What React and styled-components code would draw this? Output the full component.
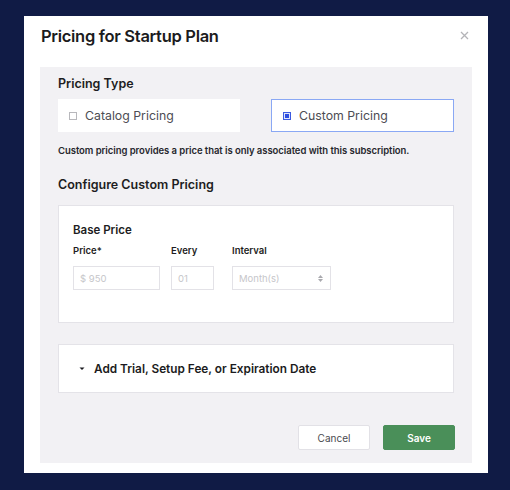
import React from "react";
import styled, { createGlobalStyle } from "styled-components";

const GlobalStyle = createGlobalStyle`
    html, body {
        margin: 0;
        padding: 0;
        background: #101b45;
    }
    body {
        font-family: Inter, "Liberation Sans", sans-serif;
        color: #1d1d22;
    }
`;

const Page = styled.div`
    width: 510px;
    height: 490px;
    box-sizing: border-box;
    padding: 16px 0 0 24px;
`;

const Modal = styled.div`
    width: 464px;
    height: 457px;
    box-sizing: border-box;
    background: #ffffff;
    padding: 0 16px;
    display: flex;
    flex-direction: column;
`;

const Header = styled.div`
    height: 51px;
    display: flex;
    align-items: center;
    justify-content: space-between;
    padding: 0 0 12px 1px;
    box-sizing: border-box;
`;

const Title = styled.h2`
    margin: 0;
    font-size: 16.5px;
    font-weight: 600;
    letter-spacing: -0.3px;
    color: #1b1b20;
`;

const Close = styled.button`
    border: 0;
    background: none;
    padding: 0;
    margin-right: 1px;
    width: 14px;
    height: 14px;
    color: #b4b4b8;
    cursor: pointer;
    display: flex;
    align-items: center;
    justify-content: center;
`;

const Panel = styled.div`
    background: #f2f1f4;
    height: 396px;
    box-sizing: border-box;
    padding: 8px 18px 0;
    display: flex;
    flex-direction: column;
`;

const SectionTitle = styled.div`
    font-size: 12.5px;
    font-weight: 600;
    line-height: 18px;
    color: #1d1d22;
    margin-top: ${(p) => p.$top || 0}px;
`;

const Options = styled.div`
    display: grid;
    grid-template-columns: 182px 183px;
    column-gap: 31px;
    margin-top: 6px;
`;

const Option = styled.div`
    height: 33px;
    box-sizing: border-box;
    background: #ffffff;
    border: 1px solid ${(p) => (p.$active ? "#8aa8f4" : "#ffffff")};
    display: flex;
    align-items: center;
    gap: 8px;
    padding-left: ${(p) => (p.$active ? 11 : 10)}px;
    font-size: 12.3px;
    color: #4d4d53;
`;

const Box = styled.span`
    width: 8px;
    height: 8px;
    box-sizing: border-box;
    border: 1px solid ${(p) => (p.$checked ? "#3c5ae0" : "#b8b8bc")};
    background: ${(p) => (p.$checked ? "#dfe6fb" : "#fff")};
    display: flex;
    align-items: center;
    justify-content: center;

    &::after {
        content: "";
        width: 4px;
        height: 4px;
        background: ${(p) => (p.$checked ? "#2f4ee0" : "transparent")};
    }
`;

const Note = styled.p`
    margin: 13px 0 0;
    font-size: 9.5px;
    font-weight: 600;
    color: #26262c;
    letter-spacing: -0.05px;
`;

const Card = styled.div`
    background: #ffffff;
    border: 1px solid #e4e3e8;
    box-sizing: border-box;
    height: ${(p) => p.$h}px;
    margin-top: ${(p) => p.$top}px;
`;

const BaseCard = styled(Card)`
    padding: 16px 14px 0;
`;

const CardTitle = styled.div`
    font-size: 11.5px;
    font-weight: 600;
    line-height: 16px;
    color: #1d1d22;
`;

const Fields = styled.div`
    display: flex;
    gap: 11px;
    margin-top: 6px;
`;

const Field = styled.div`
    display: flex;
    flex-direction: column;
    width: ${(p) => p.$w}px;
    margin-right: ${(p) => p.$gap || 0}px;
`;

const Label = styled.label`
    font-size: 9.5px;
    font-weight: 600;
    line-height: 14px;
    color: #1d1d22;
`;

const Input = styled.div`
    margin-top: 8px;
    height: 24px;
    box-sizing: border-box;
    border: 1px solid #e3e2e7;
    display: flex;
    align-items: center;
    justify-content: space-between;
    padding: 0 7px 0 6px;
    font-size: 9.5px;
    color: #c6c6ca;
    background: #fff;
`;

const Arrows = styled.span`
    display: flex;
    flex-direction: column;
    align-items: center;
    gap: 1px;
    color: #a9a9ae;
`;

const AccordionCard = styled(Card)`
    display: flex;
    align-items: center;
    padding-left: 20px;
    gap: 9px;
    font-size: 11.8px;
    font-weight: 600;
    color: #1b1b20;
`;

const Footer = styled.div`
    display: flex;
    justify-content: flex-end;
    gap: 13px;
    margin-top: 32px;
    margin-right: -1px;
`;

const Button = styled.button`
    height: 25px;
    width: ${(p) => p.$w}px;
    box-sizing: border-box;
    font-family: inherit;
    font-size: 10px;
    cursor: pointer;
    border-radius: 2px;
    border: 1px solid ${(p) => (p.$primary ? "#4a8f59" : "#e2e1e6")};
    background: ${(p) => (p.$primary ? "#4a8f59" : "#ffffff")};
    color: ${(p) => (p.$primary ? "#ffffff" : "#4a4a50")};
    font-weight: ${(p) => (p.$primary ? 600 : 400)};
`;

export default function App() {
    return (
        <>
            <GlobalStyle />
            <Page>
                <Modal>
                    <Header>
                        <Title>Pricing for Startup Plan</Title>
                        <Close aria-label="Close">
                            <svg width="9" height="9" viewBox="0 0 9 9">
                                <path
                                    d="M1 1L8 8M8 1L1 8"
                                    stroke="currentColor"
                                    strokeWidth="1.3"
                                />
                            </svg>
                        </Close>
                    </Header>
                    <Panel>
                        <SectionTitle>Pricing Type</SectionTitle>
                        <Options>
                            <Option>
                                <Box />
                                Catalog Pricing
                            </Option>
                            <Option $active>
                                <Box $checked />
                                Custom Pricing
                            </Option>
                        </Options>
                        <Note>
                            Custom pricing provides a price that is only
                            associated with this subscription.
                        </Note>
                        <SectionTitle $top={20}>
                            Configure Custom Pricing
                        </SectionTitle>
                        <BaseCard $h={118} $top={11}>
                            <CardTitle>Base Price</CardTitle>
                            <Fields>
                                <Field $w={87}>
                                    <Label>Price*</Label>
                                    <Input>$ 950</Input>
                                </Field>
                                <Field $w={43} $gap={7}>
                                    <Label>Every</Label>
                                    <Input>01</Input>
                                </Field>
                                <Field $w={99}>
                                    <Label>Interval</Label>
                                    <Input>
                                        Month(s)
                                        <Arrows>
                                            <svg width="5" height="3" viewBox="0 0 5 3">
                                                <path d="M0 3L2.5 0L5 3Z" fill="currentColor" />
                                            </svg>
                                            <svg width="5" height="3" viewBox="0 0 5 3">
                                                <path d="M0 0L2.5 3L5 0Z" fill="currentColor" />
                                            </svg>
                                        </Arrows>
                                    </Input>
                                </Field>
                            </Fields>
                        </BaseCard>
                        <AccordionCard $h={49} $top={21}>
                            <svg width="6" height="4" viewBox="0 0 6 4">
                                <path d="M0.5 0.5L3 3L5.5 0.5Z" fill="#1b1b20" />
                            </svg>
                            Add Trial, Setup Fee, or Expiration Date
                        </AccordionCard>
                        <Footer>
                            <Button $w={72}>Cancel</Button>
                            <Button $w={72} $primary>
                                Save
                            </Button>
                        </Footer>
                    </Panel>
                </Modal>
            </Page>
        </>
    );
}
